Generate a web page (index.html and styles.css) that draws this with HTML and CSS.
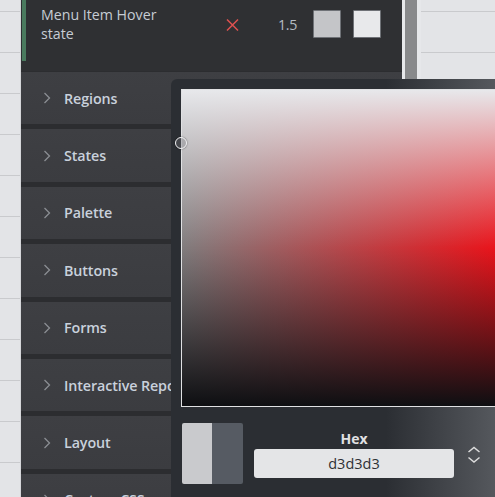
FILE: index.html
```html
<!DOCTYPE html>
<html>
<head>
<meta charset="utf-8">
<link rel="stylesheet" href="styles.css">
</head>
<body>
<div class="page">
  <div class="gutter"></div>
  <div class="panel">
    <div class="top-row">
      <div class="marker"></div>
      <div class="top-inner">
        <div class="top-label">Menu Item Hover<br>state</div>
        <svg class="x-icon" width="13" height="12" viewBox="0 0 13 12"><path d="M1 0.5 L12 11.5 M12 0.5 L1 11.5" stroke="#dd5150" stroke-width="1.5" fill="none"/></svg>
        <div class="num">1.5</div>
        <div class="swatch s1"></div>
        <div class="swatch s2"></div>
      </div>
    </div>
    <div class="acc-list">
      <div class="acc"><svg class="chev" width="8" height="12" viewBox="0 0 8 12"><path d="M1.5 1 L6.5 6 L1.5 11" stroke="#8b8e93" stroke-width="1.3" fill="none"/></svg><span>Regions</span></div>
      <div class="acc"><svg class="chev" width="8" height="12" viewBox="0 0 8 12"><path d="M1.5 1 L6.5 6 L1.5 11" stroke="#8b8e93" stroke-width="1.3" fill="none"/></svg><span>States</span></div>
      <div class="acc"><svg class="chev" width="8" height="12" viewBox="0 0 8 12"><path d="M1.5 1 L6.5 6 L1.5 11" stroke="#8b8e93" stroke-width="1.3" fill="none"/></svg><span>Palette</span></div>
      <div class="acc"><svg class="chev" width="8" height="12" viewBox="0 0 8 12"><path d="M1.5 1 L6.5 6 L1.5 11" stroke="#8b8e93" stroke-width="1.3" fill="none"/></svg><span>Buttons</span></div>
      <div class="acc"><svg class="chev" width="8" height="12" viewBox="0 0 8 12"><path d="M1.5 1 L6.5 6 L1.5 11" stroke="#8b8e93" stroke-width="1.3" fill="none"/></svg><span>Forms</span></div>
      <div class="acc"><svg class="chev" width="8" height="12" viewBox="0 0 8 12"><path d="M1.5 1 L6.5 6 L1.5 11" stroke="#8b8e93" stroke-width="1.3" fill="none"/></svg><span>Interactive Report</span></div>
      <div class="acc"><svg class="chev" width="8" height="12" viewBox="0 0 8 12"><path d="M1.5 1 L6.5 6 L1.5 11" stroke="#8b8e93" stroke-width="1.3" fill="none"/></svg><span>Layout</span></div>
      <div class="acc"><svg class="chev" width="8" height="12" viewBox="0 0 8 12"><path d="M1.5 1 L6.5 6 L1.5 11" stroke="#8b8e93" stroke-width="1.3" fill="none"/></svg><span>Custom CSS</span></div>
    </div>
  </div>
  <div class="strip"></div>
  <div class="scrollbar"></div>
  <div class="strip2"></div>
  <div class="right"></div>

  <div class="popup">
    <div class="picker">
      <div class="handle"></div>
    </div>
    <div class="controls">
      <div class="preview"><div class="half new"></div><div class="half old"></div></div>
      <div class="hex-group">
        <div class="hex-label">Hex</div>
        <div class="hex-input">d3d3d3</div>
      </div>
      <svg class="toggle" width="14" height="18" viewBox="0 0 14 18"><path d="M1.5 6 L7 1.5 L12.5 6 M1.5 11.5 L7 16 L12.5 11.5" stroke="#dcdcdc" stroke-width="1.5" fill="none"/></svg>
    </div>
  </div>
</div>
</body>
</html>
```
FILE: styles.css
```css
html, body {
  margin: 0;
  padding: 0;
}
body {
  width: 495px;
  height: 497px;
  overflow: hidden;
  font-family: "Open Sans", "Noto Sans", sans-serif;
  background: #e3e4e7;
}
.page {
  position: relative;
  width: 495px;
  height: 497px;
  overflow: hidden;
  display: flex;
  background-color: #e3e4e7;
  background-image: repeating-linear-gradient(to bottom, transparent 0, transparent 11px, #c9cacd 11px, #c9cacd 12px, transparent 12px, transparent 41px);
  background-size: 100% 41px;
}
.gutter {
  width: 21px;
  flex: 0 0 21px;
  box-shadow: inset -1px 0 0 #d5d6d9;
}
.panel {
  width: 381px;
  flex: 0 0 381px;
  background: #2c2d30;
  display: flex;
  flex-direction: column;
}
.top-row {
  height: 71px;
  flex: 0 0 71px;
  background: #2f3033;
  display: flex;
  align-items: flex-start;
}
.marker {
  width: 4px;
  height: 61px;
  margin-left: 1px;
  background: #4a7a5e;
}
.top-inner {
  display: flex;
  align-items: center;
  height: 48px;
}
.top-label {
  width: 185px;
  margin-left: 15px;
  font-size: 14.2px;
  line-height: 19px;
  color: #c6ccd4;
}
.x-icon {
  display: block;
  margin-top: 2px;
}
.num {
  margin-left: 39px;
  width: 19px;
  font-size: 14.2px;
  color: #b6bcc4;
  letter-spacing: -0.3px;
}
.swatch {
  width: 26px;
  height: 26px;
  border: 1px solid #6f7277;
  border-radius: 1px;
  margin-left: 16px;
}
.swatch.s1 { background: #c4c5c8; }
.swatch.s2 { background: #e8e9eb; margin-left: 12px; }
.acc-list {
  display: flex;
  flex-direction: column;
  gap: 5px;
  padding-top: 1px;
}
.acc {
  height: 52.4px;
  flex: 0 0 52.4px;
  background: linear-gradient(to bottom, #3e3f43, #3b3c40);
  display: flex;
  align-items: center;
  padding-left: 22px;
  white-space: nowrap;
}
.chev {
  display: block;
  flex: 0 0 8px;
}
.acc span {
  margin-left: 13px;
  font-size: 14.3px;
  font-weight: 600;
  color: #c9d1dc;
  letter-spacing: -0.1px;
}
.strip {
  width: 3px;
  flex: 0 0 3px;
  background: #e6e7ea;
}
.scrollbar {
  width: 12px;
  flex: 0 0 12px;
  background: #88898b;
}
.strip2 {
  width: 4px;
  flex: 0 0 4px;
  background: #e6e7ea;
}
.right {
  flex: 1;
}
.popup {
  position: absolute;
  left: 171px;
  top: 79px;
  width: 340px;
  height: 430px;
  border-radius: 6px 0 0 0;
  background: linear-gradient(to right, #2b2e33 0, #2b2e33 215px, #55585d 324px);
  padding: 10px 0 0 10px;
  box-sizing: border-box;
}
.picker {
  position: relative;
  width: 330px;
  height: 316px;
  border: 1px solid #e0e1e3;
  background:
    linear-gradient(to bottom, #e7e8eb 0%, rgba(231,232,235,0) 50%, rgba(14,15,18,0) 50%, #0e0f12 100%),
    linear-gradient(to right, #807c7d 0, #e9141b 314px);
}
.handle {
  position: absolute;
  left: -7px;
  top: 47px;
  width: 10px;
  height: 10px;
  border: 1.5px solid #f2f2f4;
  border-radius: 50%;
  background: rgba(120,120,125,0.35);
  box-shadow: 0 0 1.5px rgba(0,0,0,0.7);
}
.controls {
  display: flex;
  align-items: flex-start;
  margin-top: 16px;
}
.preview {
  display: flex;
  width: 61px;
  height: 61px;
  margin-left: 1px;
  border-radius: 2px;
  overflow: hidden;
}
.half.new { width: 30px; background: #c9cacd; }
.half.old { width: 31px; background: #565b63; }
.hex-group {
  margin-left: 11px;
  width: 200px;
  display: flex;
  flex-direction: column;
  align-items: center;
}
.hex-label {
  padding-top: 6px;
  height: 20px;
  line-height: 20px;
  font-size: 14px;
  font-weight: 700;
  color: #e1e1e3;
}
.hex-input {
  width: 200px;
  height: 29px;
  line-height: 29px;
  background: #e4e5e7;
  border-radius: 3px;
  text-align: center;
  font-size: 14.5px;
  color: #2f3135;
}
.toggle {
  display: block;
  margin-left: 13px;
  margin-top: 23px;
}
```
